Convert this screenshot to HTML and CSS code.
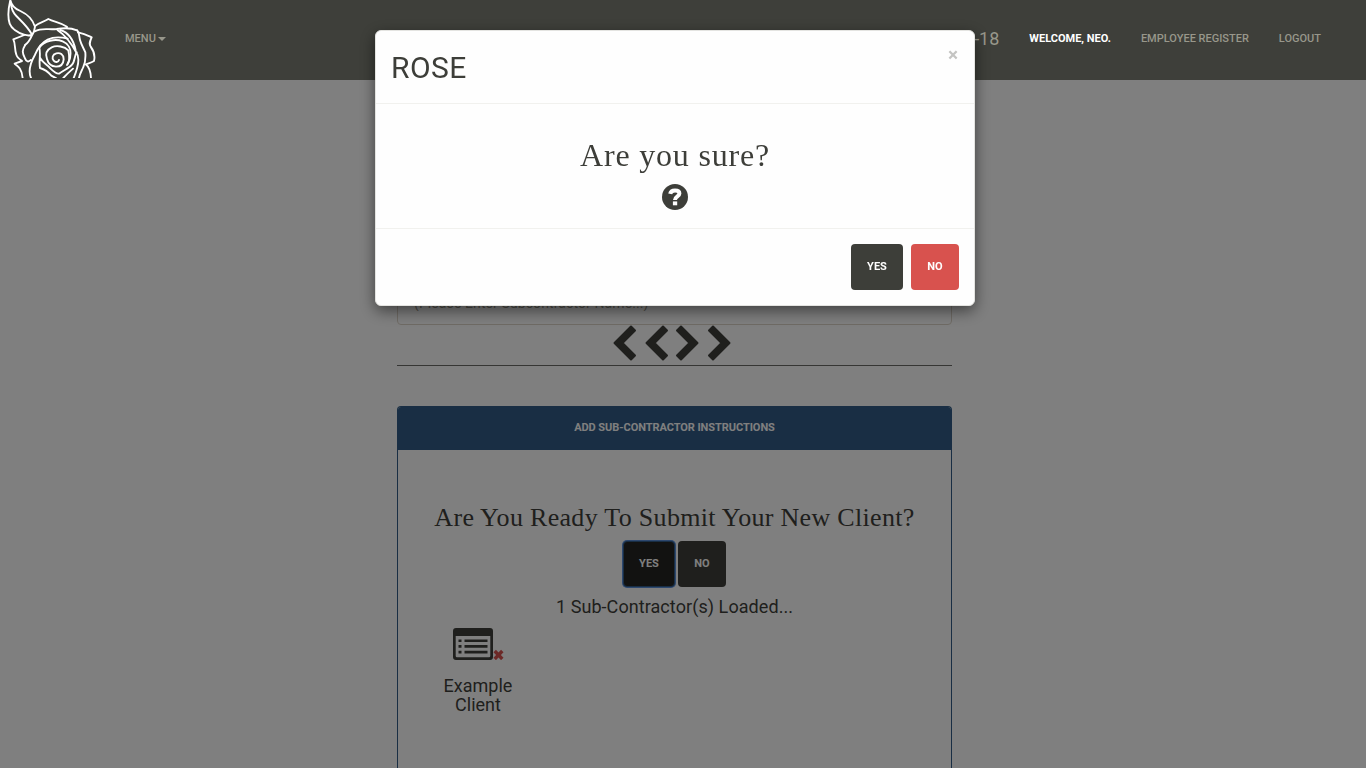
FILE: index.html
```html
<!DOCTYPE html>
<html lang="en">
<head>
<meta charset="utf-8">
<title>ROSE</title>
<link rel="stylesheet" href="styles.css">
</head>
<body>
<header class="navbar">
  <svg class="logo" viewBox="0 0 288 234" fill="none" stroke="#fff" stroke-width="5.6" stroke-linejoin="round" stroke-linecap="round">
    <path d="M31 0C25 25 24 56 29 71C34 85 53 98 72 104C82 107 91 107 97 104M31 0C34 16 44 26 61 33C81 42 98 58 105 80C104 90 101 99 96 106C91 117 85 128 76 134M33 11C34 27 39 38 49 48C64 64 82 78 96 104"/>
    <path d="M105 78C116 68 133 65 145 57C162 66 181 67 201 80M104 94C127 82 144 90 170 87C190 84 210 82 231 91"/>
    <path d="M73 105L40 118C47 131 43 148 49 164C51 173 59 178 66 183L44 191C55 199 66 208 68 234"/>
    <path d="M76 134C65 151 67 160 75 175C79 186 86 187 92 180M93 234C84 214 92 187 105 164C113 145 125 128 143 119C161 110 184 111 203 116"/>
    <path d="M173 91C195 105 215 132 229 158C243 176 231 210 221 234M181 90C206 98 220 116 227 151M231 91C238 96 237 109 240 120C244 135 251 145 256 157C257 171 256 188 250 201C245 213 239 221 237 234"/>
    <path d="M234 97C250 102 262 105 275 112C270 124 266 131 272 140C280 151 287 163 282 183C274 188 265 190 257 193C265 199 272 213 273 234"/>
    <path d="M118 143C123 165 116 183 120 204C133 208 145 216 154 227C159 230 163 232 168 234M118 143C132 122 166 115 188 124C205 131 214 147 211 166C211 178 206 187 201 195M120 173C126 187 141 193 151 205C160 214 168 222 177 221C192 210 208 204 216 194C225 185 223 167 230 157M190 234C200 223 211 213 219 206"/>
    <path d="M203 192C211 181 208 166 205 151C194 139 170 135 155 142C139 150 136 164 141 177C145 193 154 199 168 200C184 200 190 193 191 178C191 163 180 157 169 160C157 163 155 175 161 182C166 188 175 187 177 180"/>
  </svg>
  <a class="menu">MENU<i class="caret"></i></a>
  <nav class="links">
    <span class="date">-18</span>
    <b class="welcome">WELCOME, NEO.</b>
    <a class="register">EMPLOYEE REGISTER</a>
    <a class="logout">LOGOUT</a>
  </nav>
</header>

<main class="content">
  <input class="field" type="text" placeholder="(Please Enter Subcontractor Name...)">
  <div class="pager">
    <svg class="arrow" viewBox="0 0 24 36"><path d="M18 1.5L22 5.5L9.5 18L22 30.5L18 34.5L1.5 18Z"/></svg>
    <svg class="arrow" viewBox="0 0 24 36"><path d="M18 1.5L22 5.5L9.5 18L22 30.5L18 34.5L1.5 18Z"/></svg>
    <svg class="arrow next" viewBox="0 0 24 36"><path d="M6 1.5L2 5.5L14.5 18L2 30.5L6 34.5L22.5 18Z"/></svg>
    <svg class="arrow" viewBox="0 0 24 36"><path d="M6 1.5L2 5.5L14.5 18L2 30.5L6 34.5L22.5 18Z"/></svg>
  </div>
  <section class="panel">
    <div class="panel-heading">ADD SUB-CONTRACTOR INSTRUCTIONS</div>
    <div class="panel-body">
      <h3 class="question">Are You Ready To Submit Your New Client?</h3>
      <div class="choices"><button class="btn focused">YES</button><button class="btn no">NO</button></div>
      <p class="loaded">1 Sub-Contractor(s) Loaded...</p>
      <div class="client">
        <svg class="card" viewBox="0 0 51 32">
          <path fill="#3e3f3a" fill-rule="evenodd" d="M3 0H37Q40 0 40 3V29Q40 32 37 32H3Q0 32 0 29V3Q0 0 3 0ZM2.7 8V28Q2.7 29.3 4 29.3H36Q37.3 29.3 37.3 28V8Z"/>
          <path stroke="#3e3f3a" stroke-width="2.6" d="M5.5 12.7H8.5M11.5 12.7H34.5M5.5 18.4H8.5M11.5 18.4H34.5M5.5 24.1H8.5M11.5 24.1H34.5"/>
          <path stroke="#d9534f" stroke-width="3.4" d="M41.7 23L49.3 31M49.3 23L41.7 31"/>
        </svg>
        <div>Example Client</div>
      </div>
    </div>
  </section>
</main>

<div class="backdrop"></div>
<div class="modal">
  <div class="modal-header"><h4 class="modal-title">ROSE</h4><button class="close">×</button></div>
  <div class="modal-body">
    <h2 class="sure">Are you sure?</h2>
    <svg class="help" viewBox="0 0 26 26"><circle cx="13" cy="13" r="13" fill="#3e3f3a"/><path d="M8.2 9.9C8.6 7.2 10.3 6.4 13 6.4C15.9 6.4 17.4 7.6 17.4 9.5C17.4 12.5 13 12.2 13 16" fill="none" stroke="#fff" stroke-width="4"/><rect x="10.9" y="17.4" width="4.3" height="3.9" fill="#fff"/></svg>
  </div>
  <div class="modal-footer"><button class="btn">YES</button><button class="btn danger">NO</button></div>
</div>
</body>
</html>
```
FILE: styles.css
```css
* { box-sizing: border-box; }
body { margin: 0; height: 768px; overflow: hidden; background: #fff; color: #3e3f3a; font-family: Roboto, sans-serif; }
h2, h3, h4, p { margin: 0; font-weight: 400; }
.navbar { position: relative; z-index: 2; display: flex; height: 80px; background: #3e3f3a; color: #98978b; font-size: 11px; font-weight: 500; line-height: 16px; }
.logo { width: 96px; height: 78px; }
.menu { display: flex; margin: 31px 0 0 29px; height: 16px; align-items: center; }
.caret { margin: 0 0 0 2px; border: 4px solid transparent; border-top-color: currentColor; border-bottom: 0; }
.links { display: flex; align-items: center; height: 16px; margin: 31px 45px 0 auto; white-space: nowrap; }
.date { font-size: 18px; font-weight: 400; margin-right: 30px; }
.welcome { color: #fff; font-weight: 700; margin-right: 30px; }
.register { margin-right: 30px; }
.content { width: 555px; height: 489px; margin: 199px 0 0 397px; overflow: hidden; }
.field { display: block; width: 100%; height: 46px; border: 1px solid #dfd7ca; border-radius: 4px; padding: 2px 16px 0; font: 14px Roboto, sans-serif; letter-spacing: .1px; }
.field::placeholder { color: #98978b; }
.pager { display: flex; height: 41px; padding-left: 216px; border-bottom: 1px solid #6c6d69; }
.arrow { width: 24px; height: 36px; fill: #3e3f3a; stroke: #3e3f3a; stroke-width: 2px; stroke-linejoin: round; margin-right: 8px; }
.arrow.next { margin-left: -2px; }
.panel { height: 363px; margin-top: 40px; border: 1px solid #325d88; border-bottom: 0; border-radius: 4px 4px 0 0; overflow: hidden; }
.panel-heading { height: 43px; background: #325d88; color: #fff; text-align: center; font-size: 11px; font-weight: 700; line-height: 41px; letter-spacing: -.06px; }
.panel-body { text-align: center; }
.question { padding-top: 53px; height: 91px; font: 26px/30px "Liberation Serif", serif; letter-spacing: .31px; white-space: nowrap; }
.choices { display: flex; justify-content: center; gap: 3px; }
.btn { height: 46px; width: 52px; border: 0; border-radius: 4px; padding: 0 0 2px; background: #3e3f3a; color: #fff; font: 700 11px Roboto, sans-serif; }
.btn.no, .btn.danger { width: 48px; }
.btn.focused { background: #242422; border: 1px solid #325d88; box-shadow: 0 0 0 1px #5b91df; }
.btn.danger { background: #d9534f; }
.loaded { margin-top: 9px; font-size: 18px; line-height: 21px; letter-spacing: .07px; }
.client { width: 90px; margin: 11px 0 0 35px; font-size: 18px; line-height: 19px; }
.card { display: block; width: 51px; height: 32px; margin: 0 0 16px 20px; }
.backdrop { position: fixed; inset: 0; z-index: 1; background: rgba(0,0,0,.5); }
.modal { position: absolute; z-index: 3; left: 375px; top: 30px; width: 600px; height: 276px; background: #fff; opacity: .995; border: 1px solid #e5e5e2; border-radius: 6px; box-shadow: 0 5px 15px rgba(0,0,0,.5); }
.modal-header { display: flex; justify-content: space-between; height: 73px; padding: 15px; border-bottom: 1px solid #f2f2ef; }
.modal-title { font-size: 30px; line-height: 43px; letter-spacing: .4px; }
.close { height: 20px; border: 0; padding: 0; margin: -1px 1px 0 0; background: none; color: #c5c5c3; font: 700 19px/18px Roboto, sans-serif; }
.modal-body { height: 125px; padding-top: 33px; text-align: center; border-bottom: 1px solid #f2f2ef; }
.sure { font: 32px/36px "Liberation Serif", serif; letter-spacing: .8px; }
.help { display: block; width: 26px; height: 26px; margin: 11px auto 0; }
.modal-footer { display: flex; justify-content: flex-end; gap: 8px; padding: 15px; }
```
